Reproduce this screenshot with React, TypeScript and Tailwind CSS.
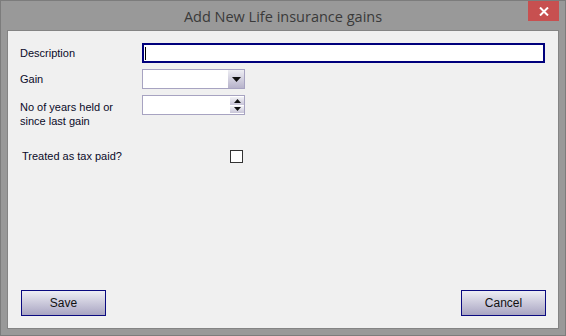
import React from "react";

const labelCls = "text-[11px] text-[#0a0a28] leading-[14px]";

function DownTriangle() {
  return (
    <svg width="9" height="5" viewBox="0 0 9 5">
      <path d="M0 0h9L4.5 5z" fill="#111" />
    </svg>
  );
}

function SpinArrow({ up }: { up?: boolean }) {
  return (
    <svg width="7" height="4" viewBox="0 0 7 4">
      <path d={up ? "M0 4h7L3.5 0z" : "M0 0h7L3.5 4z"} fill="#111" />
    </svg>
  );
}

function Field({ label, children, twoLine }: { label: React.ReactNode; children: React.ReactNode; twoLine?: boolean }) {
  return (
    <div className="flex items-start">
      <div className={`w-[122px] shrink-0 ${labelCls} ${twoLine ? "pt-[5px]" : "pt-[3px]"}`}>{label}</div>
      {children}
    </div>
  );
}

function DialogButton({ children }: { children: React.ReactNode }) {
  return (
    <button className="w-[85px] h-[26px] border border-[#0a0a80] bg-gradient-to-b from-[#eeeef4] to-[#a9a5c2] text-[12px] text-[#111]">
      {children}
    </button>
  );
}

export default function App() {
  return (
    <div
      className="w-[566px] h-[336px] bg-[#999999] border border-[#7c7c7c] flex flex-col"
      style={{ fontFamily: '"Liberation Sans", Arial, sans-serif' }}
    >
      <div className="relative h-[29px] shrink-0 flex items-center justify-center">
        <span className="text-[14.5px] text-[#3a3a3a] pt-[2px]" style={{ fontFamily: '"Open Sans", "Noto Sans", sans-serif' }}>
          Add New Life insurance gains
        </span>
        <div className="absolute top-0 right-[6px] w-[31px] h-[20px] bg-[#c75050] flex items-center justify-center">
          <svg width="10" height="9" viewBox="0 0 10 9">
            <path d="M1 0.5l8 8M9 0.5l-8 8" stroke="#fff" strokeWidth="2" />
          </svg>
        </div>
      </div>

      <div className="flex-1 mx-[6px] mb-[6px] bg-[#f0f0f0] border border-[#848484] flex flex-col">
        <div className="pl-[12px] pt-[12px] flex flex-col gap-[6px]">
          <Field label="Description">
            <div className="w-[403px] h-[20px] bg-white border-2 border-[#00007c] flex items-center pl-[1px]">
              <div className="w-[1px] h-[13px] bg-black" />
            </div>
          </Field>
          <Field label="Gain">
            <div className="w-[103px] h-[20px] bg-white border border-[#a7a3c1] flex justify-end">
              <div className="w-[16px] h-full bg-gradient-to-b from-[#eeeef3] to-[#b7b3cb] flex items-center justify-center">
                <DownTriangle />
              </div>
            </div>
          </Field>
          <Field label={<>No of years held or<br />since last gain</>} twoLine>
            <div className="w-[103px] h-[20px] bg-white border border-[#a7a3c1] flex justify-end">
              <div className="w-[14px] h-full flex flex-col gap-[1px] py-[1px]">
                <div className="flex-1 bg-gradient-to-b from-[#f2f2f6] to-[#c8c5d8] flex items-center justify-center">
                  <SpinArrow up />
                </div>
                <div className="flex-1 bg-gradient-to-b from-[#f2f2f6] to-[#c8c5d8] flex items-center justify-center">
                  <SpinArrow />
                </div>
              </div>
            </div>
          </Field>
        </div>

        <div className="flex items-center mt-[21px] pl-[14px]">
          <span className={`w-[208px] ${labelCls}`}>Treated as tax paid?</span>
          <div className="w-[13px] h-[13px] bg-white border border-[#333]" />
        </div>

        <div className="mt-auto mb-[12px] pl-[13px] pr-[12px] flex justify-between">
          <DialogButton>Save</DialogButton>
          <DialogButton>Cancel</DialogButton>
        </div>
      </div>
    </div>
  );
}
